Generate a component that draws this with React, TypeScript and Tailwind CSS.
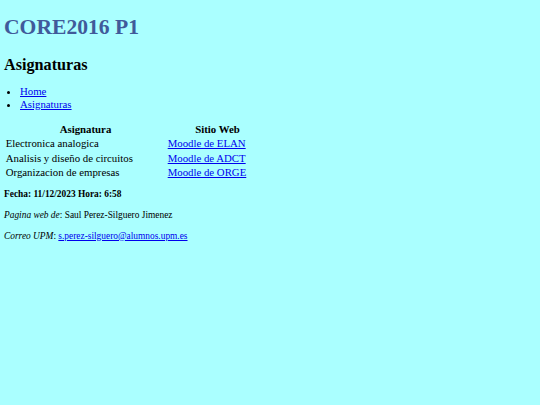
export default function App() {
  const rows = [
    { name: "Electronica analogica", link: "Moodle de ELAN" },
    { name: "Analisis y diseño de circuitos", link: "Moodle de ADCT" },
    { name: "Organizacion de empresas", link: "Moodle de ORGE" },
  ]

  return (
    <div className="min-h-screen bg-[#aaffff] px-[4px] pt-px font-['Liberation_Serif',serif] text-[10.8px] leading-[1.15] text-black">
      <h1 className="mt-[13.5px] mb-[16.5px] text-[21.6px] font-bold text-[#405a9a]">CORE2016 P1</h1>
      <h2 className="mt-[13.4px] mb-[10.4px] text-[16.2px] font-bold">Asignaturas</h2>
      <ul className="mt-[10.8px] mb-[11px] list-disc pl-[16px]">
        <li>
          <a href="#" className="text-[#0000ee] underline">Home</a>
        </li>
        <li>
          <a href="#" className="text-[#0000ee] underline">Asignaturas</a>
        </li>
      </ul>
      <table className="w-[265px] border-separate border-spacing-[1.35px] leading-[1.12]">
        <thead>
          <tr>
            <th className="w-[161px] p-[0.7px] text-center font-bold">Asignatura</th>
            <th className="p-[0.7px] text-center font-bold">Sitio Web</th>
          </tr>
        </thead>
        <tbody>
          {rows.map((r) => (
            <tr key={r.link}>
              <td className="p-[0.7px]">{r.name}</td>
              <td className="p-[0.7px]">
                <a href="#" className="text-[#0000ee] underline">{r.link}</a>
              </td>
            </tr>
          ))}
        </tbody>
      </table>
      <p className="mt-[9.5px] mb-[10px] text-[9.4px] font-bold">Fecha: 11/12/2023 Hora: 6:58</p>
      <p className="my-[10px] text-[9.4px]">
        <i>Pagina web de</i>: Saul Perez-Silguero Jimenez
      </p>
      <p className="my-[10px] text-[9.4px]">
        <i>Correo UPM</i>:{" "}
        <a href="#" className="text-[#0000ee] underline">s.perez-silguero@alumnos.upm.es</a>
      </p>
    </div>
  )
}
